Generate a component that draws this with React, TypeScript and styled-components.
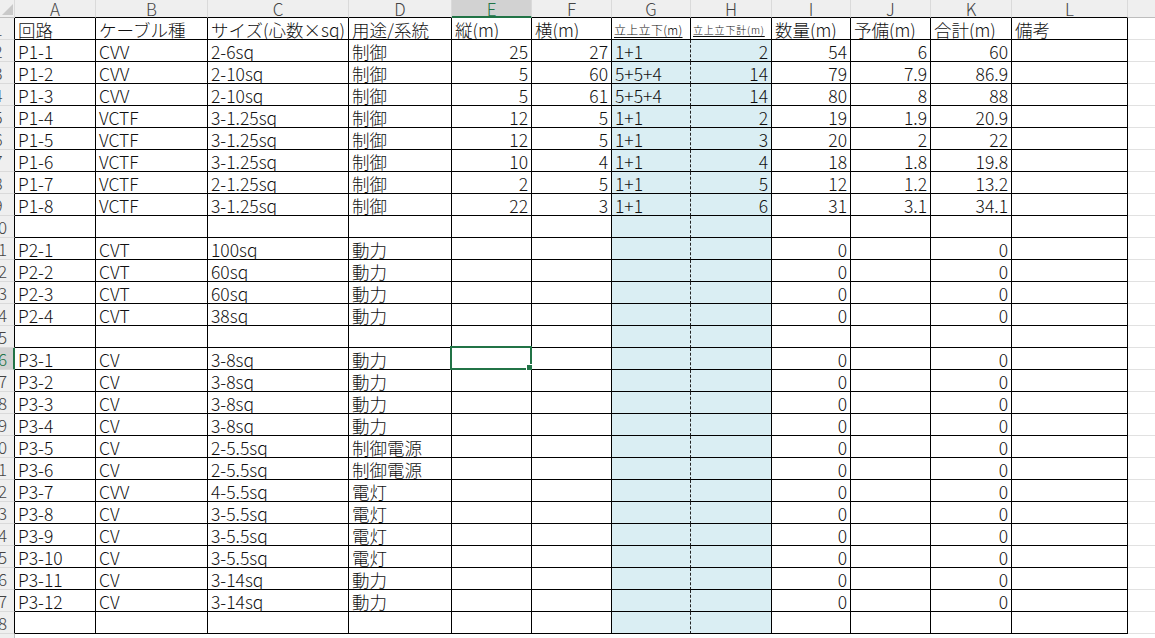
import React from "react";
import styled, { createGlobalStyle, css } from "styled-components";

const GlobalStyle = createGlobalStyle`
  html, body { margin: 0; padding: 0; background: #ffffff; overflow: hidden; }
  body { font-family: "Noto Sans CJK JP", "Noto Sans", sans-serif; }
`;

const COLS = ["A", "B", "C", "D", "E", "F", "G", "H", "I", "J", "K", "L", "M"];
const TEMPLATE = "15px 81px 112px 141px 103px 80px 80px 79px 81px 79px 80px 81px 116px 81px";
const NUMERIC = new Set([4, 5, 7, 8, 9, 10]);
const GREEN = "#217346";
const BLUE = "#daeef3";
const GRID = "#dadada";
const HEAD_BG = "#efefef";

type Row = (string | number)[];

const header: Row = ["回路", "ケーブル種", "サイズ(心数×sq)", "用途/系統", "縦(m)", "横(m)", "立上立下(m)", "立上立下計(m)", "数量(m)", "予備(m)", "合計(m)", "備考"];

const p3 = (n: number, type: string, size: string, use: string): Row => [`P3-${n}`, type, size, use, "", "", "", "", 0, "", 0, ""];
const p2 = (n: number, size: string): Row => [`P2-${n}`, "CVT", size, "動力", "", "", "", "", 0, "", 0, ""];
const blank: Row = ["", "", "", "", "", "", "", "", "", "", "", ""];

const data: Row[] = [
  header,
  ["P1-1", "CVV", "2-6sq", "制御", 25, 27, "1+1", 2, 54, 6, 60, ""],
  ["P1-2", "CVV", "2-10sq", "制御", 5, 60, "5+5+4", 14, 79, 7.9, 86.9, ""],
  ["P1-3", "CVV", "2-10sq", "制御", 5, 61, "5+5+4", 14, 80, 8, 88, ""],
  ["P1-4", "VCTF", "3-1.25sq", "制御", 12, 5, "1+1", 2, 19, 1.9, 20.9, ""],
  ["P1-5", "VCTF", "3-1.25sq", "制御", 12, 5, "1+1", 3, 20, 2, 22, ""],
  ["P1-6", "VCTF", "3-1.25sq", "制御", 10, 4, "1+1", 4, 18, 1.8, 19.8, ""],
  ["P1-7", "VCTF", "2-1.25sq", "制御", 2, 5, "1+1", 5, 12, 1.2, 13.2, ""],
  ["P1-8", "VCTF", "3-1.25sq", "制御", 22, 3, "1+1", 6, 31, 3.1, 34.1, ""],
  blank,
  p2(1, "100sq"),
  p2(2, "60sq"),
  p2(3, "60sq"),
  p2(4, "38sq"),
  blank,
  p3(1, "CV", "3-8sq", "動力"),
  p3(2, "CV", "3-8sq", "動力"),
  p3(3, "CV", "3-8sq", "動力"),
  p3(4, "CV", "3-8sq", "動力"),
  p3(5, "CV", "2-5.5sq", "制御電源"),
  p3(6, "CV", "2-5.5sq", "制御電源"),
  p3(7, "CVV", "4-5.5sq", "電灯"),
  p3(8, "CV", "3-5.5sq", "電灯"),
  p3(9, "CV", "3-5.5sq", "電灯"),
  p3(10, "CV", "3-5.5sq", "電灯"),
  p3(11, "CV", "3-14sq", "動力"),
  p3(12, "CV", "3-14sq", "動力"),
  blank,
];

const SELECTED_ROW = 16;
const SELECTED_COL = 4;

const Sheet = styled.div`
  width: 1155px;
  height: 638px;
  overflow: hidden;
  background: #ffffff;
  display: flex;
  flex-direction: column;
`;

const GridRow = styled.div<{ $height: number }>`
  display: grid;
  grid-template-columns: ${TEMPLATE};
  height: ${(p) => p.$height}px;
  flex: 0 0 auto;
`;

const Corner = styled.div`
  position: relative;
  background: ${HEAD_BG};
  border-right: 1px solid ${GRID};
  border-bottom: 1px solid #bdbdbd;
  box-sizing: border-box;
  overflow: hidden;
`;

const CornerTriangle = styled.svg`
  position: absolute;
  right: 1px;
  bottom: 2px;
`;

const ColHead = styled.div<{ $selected?: boolean; $inTable?: boolean }>`
  box-sizing: border-box;
  background: ${(p) => (p.$selected ? "#d2d2d2" : HEAD_BG)};
  color: ${(p) => (p.$selected ? GREEN : "#444")};
  border-right: 1px solid ${GRID};
  border-bottom: ${(p) => (p.$selected ? `2px solid ${GREEN}` : p.$inTable ? "1px solid #000" : "1px solid #bdbdbd")};
  font-size: 17px;
  font-weight: 300;
  line-height: 17px;
  text-align: center;
  overflow: hidden;
`;

const RowHead = styled.div<{ $selected?: boolean; $inTable?: boolean }>`
  box-sizing: border-box;
  background: ${(p) => (p.$selected ? "#d2d2d2" : HEAD_BG)};
  color: ${(p) => (p.$selected ? GREEN : "#444")};
  border-bottom: 1px solid ${GRID};
  border-right: ${(p) => (p.$selected ? `2px solid ${GREEN}` : p.$inTable ? "1px solid #000" : `1px solid #bdbdbd`)};
  overflow: hidden;
  font-size: 17px;
  font-weight: 300;
  line-height: 22px;
`;

const RowNumber = styled.div`
  width: 30px;
  margin-left: -17px;
  text-align: center;
`;

const Cell = styled.div<{ $numeric?: boolean; $blue?: boolean; $dashed?: boolean; $small?: number }>`
  position: relative;
  box-sizing: border-box;
  border-right: ${(p) => (p.$dashed ? "1px dashed #222" : "1px solid #000")};
  border-bottom: 1px solid #000;
  background: ${(p) => (p.$blue ? BLUE : "#ffffff")};
  color: #111;
  font-size: ${(p) => p.$small ?? 17.5}px;
  font-weight: 300;
  line-height: 19px;
  padding: 0 3px 0 3px;
  white-space: nowrap;
  overflow: visible;
  display: flex;
  align-items: flex-end;
  justify-content: ${(p) => (p.$numeric ? "flex-end" : "flex-start")};
  ${(p) =>
    p.$small &&
    css`
      text-decoration: underline;
      text-underline-offset: 2px;
      letter-spacing: ${p.$small < 11 ? "0.8px" : "0.3px"};
      padding-left: 2px;
      padding-bottom: 2px;
      line-height: 15px;
    `}
`;

const EmptyCell = styled.div`
  box-sizing: border-box;
  border-bottom: 1px solid #e1e1e1;
`;

const Selection = styled.div`
  position: absolute;
  left: -2px;
  top: -2px;
  right: -1px;
  bottom: -1px;
  border: 2px solid ${GREEN};
  pointer-events: none;
`;

const Handle = styled.div`
  position: absolute;
  right: -4px;
  bottom: -4px;
  width: 6px;
  height: 6px;
  background: ${GREEN};
  border: 1px solid #ffffff;
  box-sizing: content-box;
`;

const fmt = (v: string | number) => (typeof v === "number" ? String(v) : v);

export default function App() {
  const totalRows = 29;
  return (
    <>
      <GlobalStyle />
      <Sheet>
        <GridRow $height={18}>
          <Corner>
            <CornerTriangle width="11" height="11" viewBox="0 0 11 11">
              <polygon points="11,0 11,11 0,11" fill="#c9c9c9" />
            </CornerTriangle>
          </Corner>
          {COLS.map((c, i) => (
            <ColHead key={c} $selected={i === SELECTED_COL} $inTable={i < 12}>
              {c}
            </ColHead>
          ))}
        </GridRow>
        {Array.from({ length: totalRows }, (_, r) => {
          const rowNo = r + 1;
          const row = data[r];
          const inTable = r < data.length;
          return (
            <GridRow key={rowNo} $height={22}>
              <RowHead $selected={rowNo === SELECTED_ROW} $inTable={inTable}>
                <RowNumber>{rowNo}</RowNumber>
              </RowHead>
              {inTable
                ? row.map((v, ci) => {
                    const isHeader = r === 0;
                    const blue = !isHeader && (ci === 6 || ci === 7);
                    const small = isHeader && ci === 6 ? 12 : isHeader && ci === 7 ? 10 : undefined;
                    const numeric = !isHeader && (NUMERIC.has(ci) || typeof v === "number");
                    const selected = rowNo === SELECTED_ROW && ci === SELECTED_COL;
                    return (
                      <Cell key={ci} $numeric={numeric} $blue={blue} $dashed={!isHeader && ci === 6} $small={small}>
                        {fmt(v)}
                        {selected && (
                          <Selection>
                            <Handle />
                          </Selection>
                        )}
                      </Cell>
                    );
                  })
                : Array.from({ length: 12 }, (_, ci) => <EmptyCell key={ci} />)}
              <EmptyCell />
            </GridRow>
          );
        })}
      </Sheet>
    </>
  );
}
